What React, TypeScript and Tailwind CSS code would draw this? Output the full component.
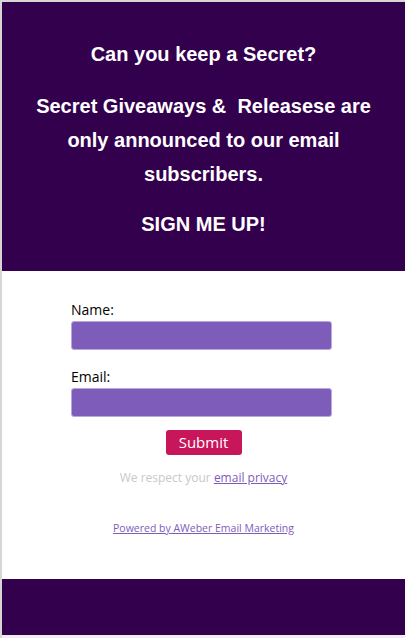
const App = () => {
  return (
    <div className="w-[405px] h-[638px] bg-[#f3eaf6] border-l-2 border-t-2 border-[#d6d6d6] font-['Open_Sans',sans-serif]">
      <div className="bg-[#33004e] pt-[35px] pb-[30px] text-center text-white font-bold text-[20px] leading-[34px] font-['Liberation_Sans',Arial,sans-serif]">
        <p>Can you keep a Secret?</p>
        <p className="mt-[18px] px-6">
          Secret Giveaways &amp;&nbsp; Releasese are only announced to our email subscribers.
        </p>
        <p className="mt-[16px]">SIGN ME UP!</p>
      </div>

      <div className="bg-white h-[308px] pt-[29px]">
        <div className="ml-[69px] w-[261px]">
          <label className="block text-sm leading-5 text-black">Name:</label>
          <input
            type="text"
            className="mt-px block w-full h-[29px] rounded-[3px] border border-[#b9a8dc] bg-[#7e5dba]"
          />
          <label className="block mt-[17px] text-sm leading-5 text-black">Email:</label>
          <input
            type="text"
            className="mt-px block w-full h-[29px] rounded-[3px] border border-[#b9a8dc] bg-[#7e5dba]"
          />
        </div>

        <div className="flex justify-center mt-[13px]">
          <button className="w-[76px] h-[25px] rounded-[3px] bg-[#c8165b] text-white text-[15px] leading-[25px]">
            Submit
          </button>
        </div>

        <p className="mt-[15px] text-center text-xs leading-4 text-[#c8c8c8]">
          We respect your{" "}
          <a href="#" className="underline text-[#7e5dba] font-medium">email privacy</a>
        </p>

        <p className="mt-[34px] text-center text-[10.5px] leading-4 font-medium">
          <a href="#" className="underline text-[#7e5dba]">Powered by AWeber Email Marketing</a>
        </p>
      </div>

      <div className="bg-[#33004e] h-[56px]"></div>
    </div>
  );
};

export default App;
